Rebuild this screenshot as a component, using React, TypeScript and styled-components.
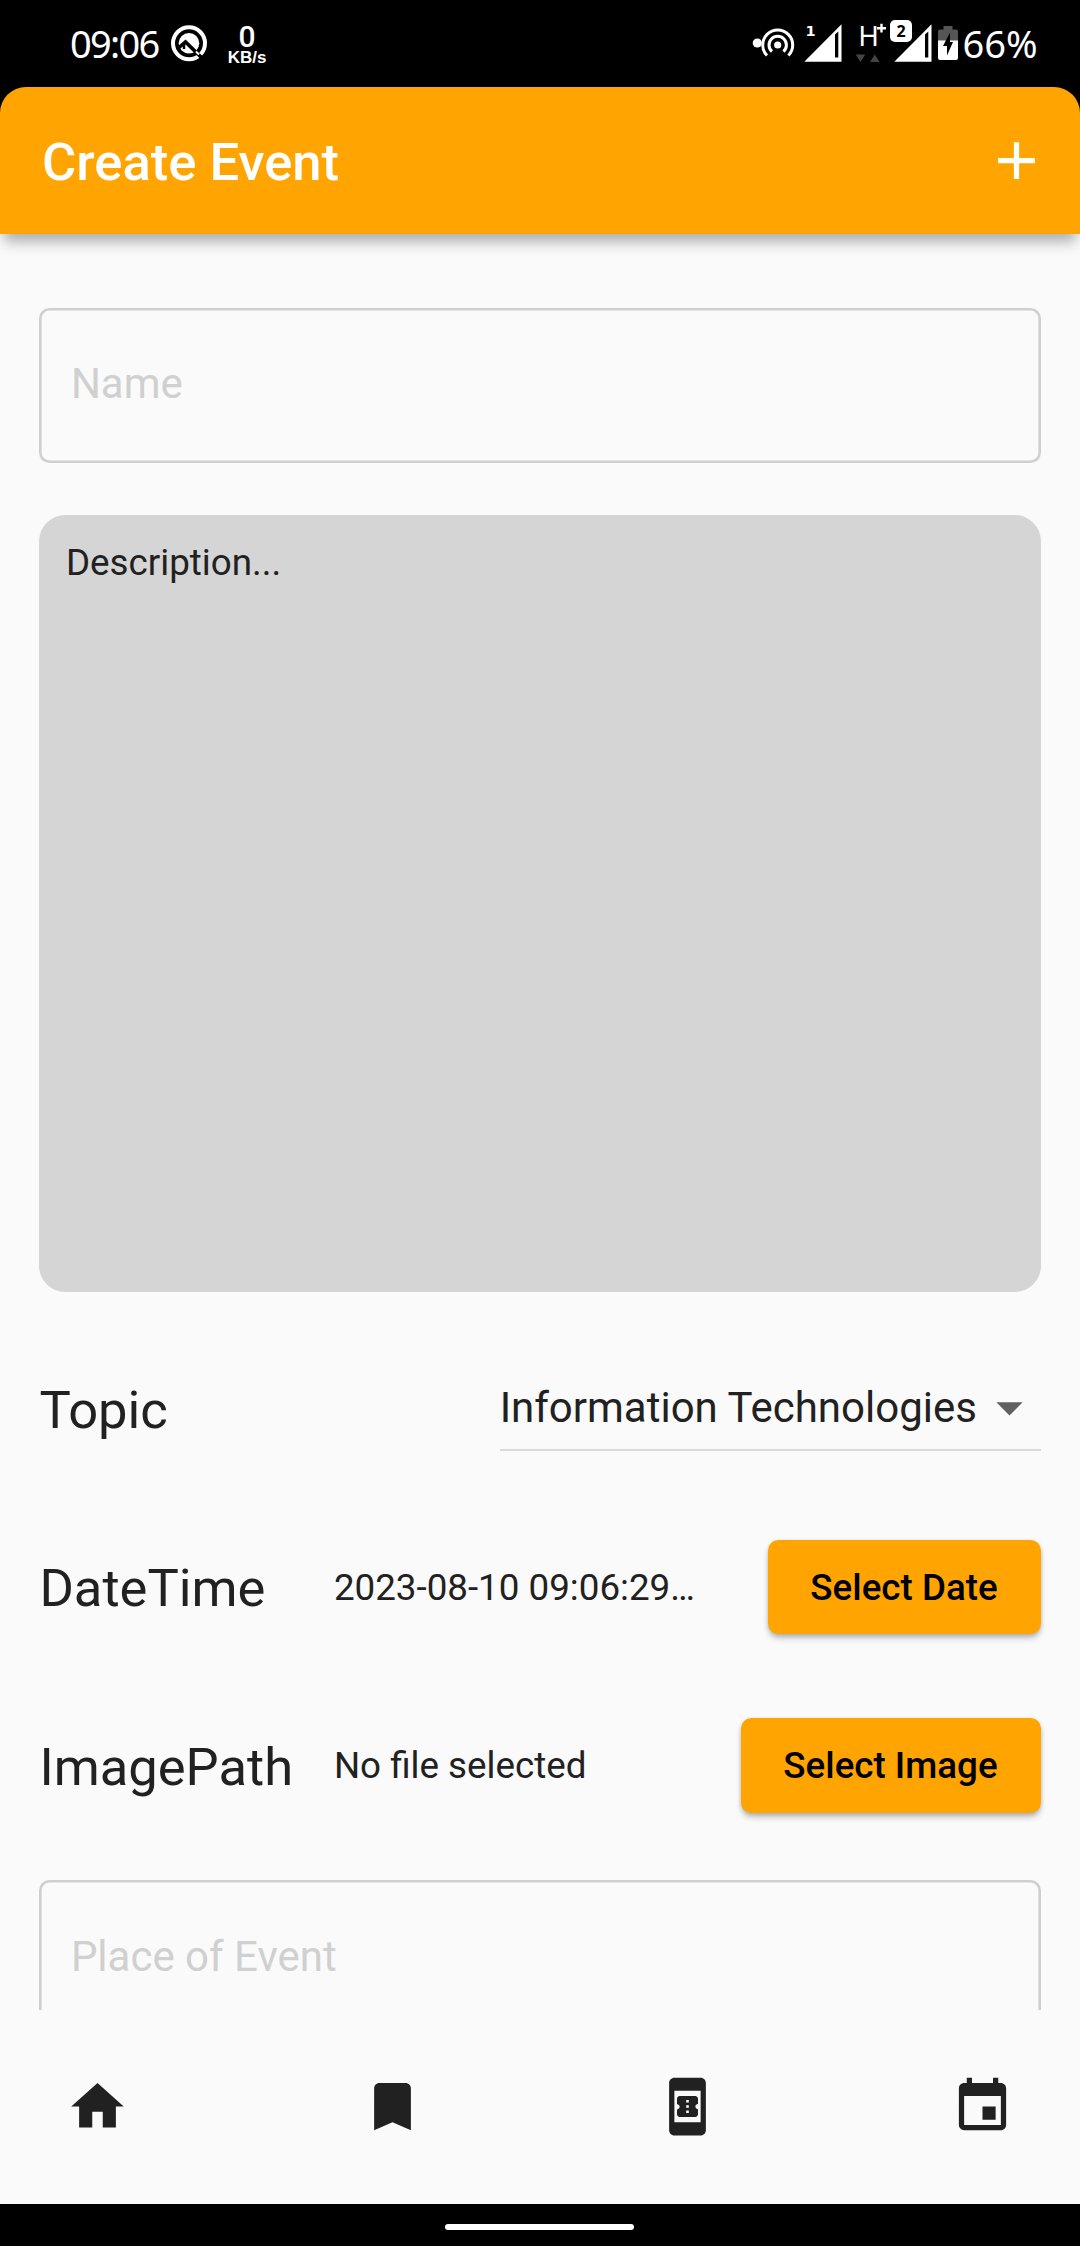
import React from "react";
import styled, { createGlobalStyle } from "styled-components";
import { MdAdd, MdArrowDropDown, MdHome, MdBookmark, MdBookOnline, MdEvent } from "react-icons/md";

const Global = createGlobalStyle`
  *, *::before, *::after { box-sizing: border-box; }
  body { margin: 0; background: #000; }
  button, input, textarea { font: inherit; border: 0; margin: 0; }
`;

const Screen = styled.div`
  width: 1080px;
  height: 2246px;
  display: flex;
  flex-direction: column;
  background: #000;
  overflow: hidden;
  color: #212121;
  font-family: Roboto, sans-serif;
`;

/* ---------- status bar ---------- */

const StatusBar = styled.div`
  height: 87px;
  flex: none;
  display: flex;
  justify-content: space-between;
  align-items: flex-start;
  padding: 20px 42.5px 0 70px;
  color: #fff;
  font-family: "Noto Sans", sans-serif;
`;

const StatusGroup = styled.div`
  display: flex;
  align-items: flex-start;
`;

const Clock = styled.span`
  width: 91px;
  font-size: 38px;
  line-height: 46px;
  letter-spacing: -1.7px;
  white-space: nowrap;
`;

const Percent = styled.span`
  margin-left: 4.5px;
  font-size: 38px;
  line-height: 46px;
`;

const NetSpeed = styled.div`
  display: flex;
  flex-direction: column;
  align-items: center;
  width: 42px;
  margin-left: 18px;
  padding-top: 3px;
`;

const SpeedValue = styled.span`
  font-family: Roboto, sans-serif;
  font-size: 30px;
  font-weight: 500;
  line-height: 27px;
`;

const SpeedUnit = styled.span`
  font-family: "Liberation Sans", sans-serif;
  font-size: 17px;
  font-weight: 700;
  line-height: 15px;
`;

const StatusIcon = styled.svg<{ $gap?: number }>`
  display: block;
  flex: none;
  overflow: visible;
  margin-left: ${(p) => p.$gap ?? 0}px;
`;

/* ---------- app bar ---------- */

const AppBar = styled.header`
  position: relative;
  z-index: 1;
  flex: none;
  height: 147px;
  display: flex;
  align-items: center;
  justify-content: space-between;
  padding: 0 32px 0 42px;
  background: #ffa400;
  border-radius: 26px 26px 0 0;
  box-shadow: 0 12px 14px -4px rgba(0, 0, 0, 0.3);
  color: #fff;
`;

const Title = styled.h1`
  margin: 0;
  padding-top: 3px;
  font-size: 52.5px;
  line-height: 62px;
  font-weight: 500;
`;

const IconButton = styled.button`
  display: flex;
  padding: 0;
  background: none;
  color: inherit;
  font-size: 63px;
`;

/* ---------- form ---------- */

const Form = styled.main`
  flex: none;
  height: 1776px;
  overflow: hidden;
  display: flex;
  flex-direction: column;
  padding: 73.5px 39.375px 0;
  background: #fafafa;
`;

const Field = styled.input<{ $lift?: number }>`
  flex: none;
  width: 100%;
  height: 155px;
  padding: 0 31.5px ${(p) => p.$lift ?? 0}px;
  border-radius: 10.5px;
  background: transparent;
  box-shadow: inset 0 0 0 2.6px #cfcfcf;
  color: #212121;
  font-size: 42px;
  &::placeholder { color: #d0d0d0; opacity: 1; }
`;

const Description = styled.textarea`
  flex: none;
  display: block;
  width: 100%;
  height: 777px;
  margin: 52.5px 0 27.3px;
  padding: 26px 26.6px;
  border-radius: 26.25px;
  background: #d5d5d5;
  resize: none;
  font-size: 36.75px;
  line-height: 43px;
  &::placeholder { color: #212121; opacity: 1; }
`;

const Row = styled.div`
  flex: none;
  height: 178.5px;
  display: flex;
  align-items: center;
`;

const Label = styled.span`
  width: 294.5px;
  padding-top: 2px;
  font-size: 52.5px;
  line-height: 62px;
`;

const Value = styled.span`
  flex: 1;
  white-space: nowrap;
  font-size: 36.75px;
  line-height: 43px;
`;

const Dropdown = styled.div`
  width: 541px;
  height: 84px;
  margin-left: auto;
  display: flex;
  align-items: center;
  justify-content: space-between;
  border-bottom: 2px solid #dadada;
  font-size: 42px;
  white-space: nowrap;
  svg { flex: none; color: #616161; font-size: 63px; }
`;

const Button = styled.button`
  height: 94.5px;
  padding: 0 43px 0 42.5px;
  border-radius: 10.5px;
  background: #ffa400;
  color: #000;
  font-size: 36.75px;
  font-weight: 500;
  white-space: nowrap;
  box-shadow:
    0 5px 6px -1px rgba(0, 0, 0, 0.24),
    0 1px 4px rgba(0, 0, 0, 0.14);
`;

const Spacer = styled.div`
  flex: none;
  height: 25px;
`;

/* ---------- bottom navigation ---------- */

const BottomNav = styled.nav`
  flex: none;
  height: 194px;
  display: flex;
  align-items: flex-start;
  justify-content: space-between;
  padding: 64.6px 65.6px 0;
  background: #fafafa;
  color: #212121;
`;

const GestureBar = styled.div`
  flex: 1;
  display: flex;
  justify-content: center;
  align-items: flex-start;
  padding: 20px 1px 0 0;
`;

const Pill = styled.div`
  width: 189px;
  height: 6px;
  border-radius: 3px;
  background: #fff;
`;

/* ---------- status icons ---------- */

const QIcon = () => (
  <StatusIcon width="38" height="42" viewBox="170 20 38 42" $gap={9}>
    <circle cx="189" cy="43.3" r="16" fill="none" stroke="#fff" strokeWidth="4" />
    <circle cx="189" cy="43.3" r="10.3" fill="#fff" />
    <path d="M179 47.500l6.500-5.500 17.500 17" fill="none" stroke="#000" strokeWidth="3.600" />
    <path d="M184 43v6" stroke="#000" strokeWidth="2.500" />
    <path d="M196 51.500l3 3" stroke="#fff" strokeWidth="2" />
  </StatusIcon>
);

const HotspotIcon = () => (
  <StatusIcon width="44" height="42" viewBox="752 20 44 42">
    <circle cx="757.3" cy="43" r="4.600" fill="#fff" />
    <circle cx="777.7" cy="45" r="3.600" fill="#fff" />
    <g fill="none" stroke="#fff" strokeWidth="3">
      <path d="M767 55.500a15 15 0 1 1 21.400 0" />
      <path d="M772 51.500a8.700 8.700 0 1 1 11.400 0" />
    </g>
  </StatusIcon>
);

const SignalIcon = ({ label, badge, gap }: { label: string; badge?: boolean; gap: number }) => (
  <StatusIcon width="42" height="42" viewBox="0 0 42 42" $gap={gap}>
    <path d="M4.300 41.700L41.500 4.300V41.700Z" fill="#fff" />
    <path d="M35 14.500l3.300-3V37.500H35z" fill="#000" />
    {badge && <rect x="0" y="0" width="22" height="22" rx="5" fill="#fff" />}
    <text
      x={badge ? 11 : 10.500}
      y={badge ? 16.500 : 16}
      textAnchor="middle"
      fontFamily={badge ? "Noto Sans, sans-serif" : "DejaVu Sans, sans-serif"}
      fontWeight="700"
      fontSize={badge ? 16 : 14.500}
      fill={badge ? "#000" : "#fff"}
    >
      {label}
    </text>
  </StatusIcon>
);

const NetworkIcon = () => (
  <StatusIcon width="35" height="43" viewBox="855 20 35 43" $gap={13}>
    <text x="858.3" y="46" fontFamily="Noto Sans, sans-serif" fontSize="28" fill="#fff">H</text>
    <path d="M877 28.200h9M881.500 23.800v8.800" stroke="#fff" strokeWidth="2.400" />
    <path d="M855.700 54.500h9.600l-4.800 7.500zM870 62h9.600l-4.800-7.500z" fill="#444" />
  </StatusIcon>
);

const BatteryIcon = () => (
  <StatusIcon width="20" height="42" viewBox="938 20 20 42" $gap={6}>
    <path d="M943.500 26h9v3.500h3.500a2 2 0 0 1 2 2V41h-20v-9.500a2 2 0 0 1 2-2h3.500z" fill="#555" />
    <path d="M938 40.500h20V58a2 2 0 0 1-2 2h-16a2 2 0 0 1-2-2z" fill="#fff" />
    <path d="M950 32.500l-7 13.500h4v9.500l6-13.500H950z" fill="#000" />
  </StatusIcon>
);

export default function App() {
  return (
    <>
      <Global />
      <Screen>
        <StatusBar>
          <StatusGroup>
            <Clock>09:06</Clock>
            <QIcon />
            <NetSpeed>
              <SpeedValue>0</SpeedValue>
              <SpeedUnit>KB/s</SpeedUnit>
            </NetSpeed>
          </StatusGroup>
          <StatusGroup>
            <HotspotIcon />
            <SignalIcon label="1" gap={4} />
            <NetworkIcon />
            <SignalIcon label="2" badge gap={0} />
            <BatteryIcon />
            <Percent>66%</Percent>
          </StatusGroup>
        </StatusBar>

        <AppBar>
          <Title>Create Event</Title>
          <IconButton aria-label="Add"><MdAdd /></IconButton>
        </AppBar>

        <Form>
          <Field placeholder="Name" $lift={3} />
          <Description placeholder="Description..." />
          <Row>
            <Label>Topic</Label>
            <Dropdown>
              Information Technologies
              <MdArrowDropDown />
            </Dropdown>
          </Row>
          <Row>
            <Label>DateTime</Label>
            <Value>2023-08-10 09:06:29…</Value>
            <Button>Select Date</Button>
          </Row>
          <Row>
            <Label>ImagePath</Label>
            <Value>No file selected</Value>
            <Button>Select Image</Button>
          </Row>
          <Spacer />
          <Field placeholder="Place of Event" $lift={1} />
        </Form>

        <BottomNav>
          <IconButton aria-label="Home"><MdHome /></IconButton>
          <IconButton aria-label="Saved"><MdBookmark /></IconButton>
          <IconButton aria-label="Tickets"><MdBookOnline /></IconButton>
          <IconButton aria-label="Events"><MdEvent /></IconButton>
        </BottomNav>
        <GestureBar><Pill /></GestureBar>
      </Screen>
    </>
  );
}
